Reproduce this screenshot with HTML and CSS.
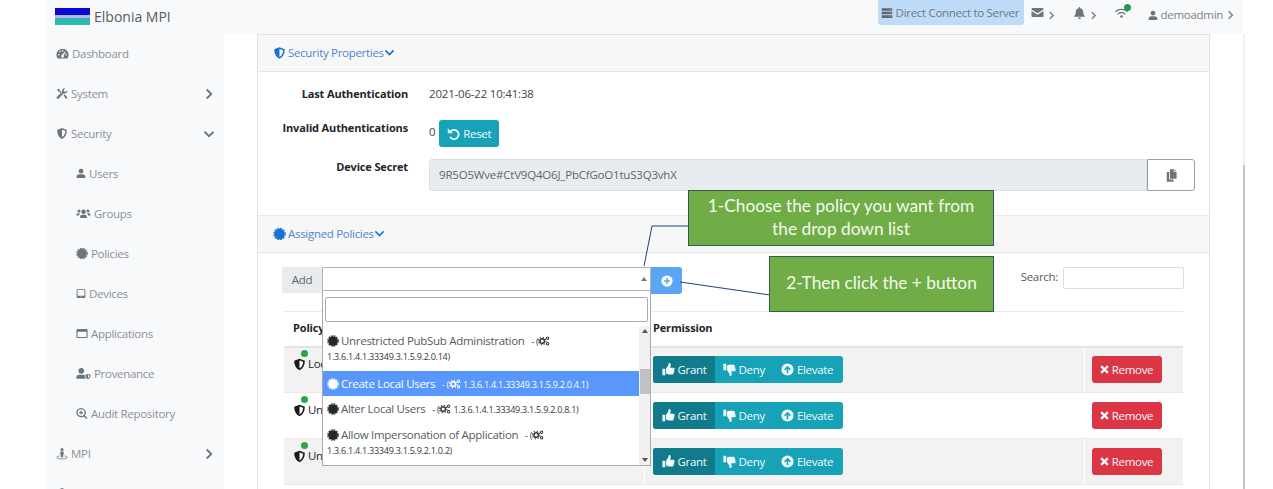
FILE: index.html
```html
<!DOCTYPE html>
<html lang="en">
<head>
    <meta charset="UTF-8">
    <title>Elbonia MPI</title>
    <link rel="stylesheet" href="styles.css">
</head>
<body>
    <svg class="icon-defs" width="0" height="0">
        <symbol id="i-gauge" viewBox="0 0 16 16"><path fill-rule="evenodd" d="M8 2A7.5 7.5 0 0 0 .5 9.5c0 1.5.5 3 1.3 4.2.2.2.4.3.7.3h11c.3 0 .5-.1.7-.3.8-1.200 1.300-2.700 1.300-4.200A7.500 7.500 0 0 0 8 2zM3.500 10.500a1 1 0 1 1 0-2 1 1 0 0 1 0 2zM5 6.500a1 1 0 1 1 0-2 1 1 0 0 1 0 2zM8 5.500a1 1 0 1 1 0-2 1 1 0 0 1 0 2zM12.500 10.500a1 1 0 1 1 0-2 1 1 0 0 1 0 2zM9.800 11a1.800 1.800 0 1 1-2.600-1.200L11 5.500l.8.5-2.400 4.500c.2.100.3.300.4.500z"/></symbol>
        <symbol id="i-tools" viewBox="0 0 16 16"><path d="M1.500 3 3 1.500l2 1.200.2 1.500 3 3-1.200 1.200-3-3-1.300-.2zM11.500 1a3.500 3.500 0 0 0-3.300 4.600L1.200 12.500a1.600 1.600 0 0 0 2.300 2.300l6.900-7A3.500 3.500 0 0 0 14.800 3.500L12.700 5.600l-2-.4-.4-2L12.400 1.100A3.500 3.500 0 0 0 11.500 1zM10 10l1-1 3.800 3.800a1.500 1.500 0 0 1-2 2z"/></symbol>
        <symbol id="i-shield" viewBox="0 0 16 16"><path d="M8 .8 14.500 3.300c0 5.500-2 9.700-6.500 11.900C3.500 13 1.500 8.800 1.500 3.300z"/><path fill="#fff" d="M8 3v9.800c2.900-1.700 4.300-4.600 4.500-8.200z"/></symbol>
        <symbol id="i-user" viewBox="0 0 16 16"><circle cx="8" cy="4.200" r="3.700"/><path d="M1 15v-2c0-2.300 1.700-4 4-4h6c2.300 0 4 1.700 4 4v2z"/></symbol>
        <symbol id="i-users" viewBox="0 0 20 16"><circle cx="10" cy="5.500" r="3"/><circle cx="4" cy="4.500" r="2"/><circle cx="16" cy="4.500" r="2"/><path d="M5.500 14v-1.500c0-2 1.300-3 3-3h3c1.700 0 3 1 3 3V14zM.5 10.500c0-2 1-3 2.500-3h2c.300 0 .6.100.8.300C4.500 8.500 4 9.500 3.800 10.500zM19.500 10.500c0-2-1-3-2.500-3h-2c-.3 0-.6.100-.8.300 1.300.7 1.800 1.700 2 2.700z"/></symbol>
        <symbol id="i-cert" viewBox="0 0 16 16"><circle cx="8" cy="8" r="6.500"/><circle cx="8" cy="8" r="7" fill="none" stroke="currentColor" stroke-width="1.400" stroke-dasharray="2.400 1.265"/></symbol>
        <symbol id="i-tablet" viewBox="0 0 16 16"><path fill-rule="evenodd" d="M2.500 1h11A1.500 1.500 0 0 1 15 2.500v11a1.500 1.500 0 0 1-1.500 1.500h-11A1.500 1.500 0 0 1 1 13.500v-11A1.500 1.500 0 0 1 2.500 1zM2.500 2.500V11.500h11V2.500zM8 12.300a.8.8 0 1 0 0 1.600.8.800 0 0 0 0-1.600z"/></symbol>
        <symbol id="i-window" viewBox="0 0 16 16"><path fill-rule="evenodd" d="M2 2h12a1.500 1.500 0 0 1 1.500 1.500v9A1.500 1.500 0 0 1 14 14H2a1.500 1.500 0 0 1-1.500-1.500v-9A1.500 1.500 0 0 1 2 2zM2 5.500v7h12v-7z"/></symbol>
        <symbol id="i-user-shield" viewBox="0 0 20 16"><circle cx="7" cy="4.500" r="3.700"/><path d="M.5 15v-2c0-2 1.500-3.500 3.500-3.500h6c.5 0 1 .1 1.400.3.100 2 .6 3.800 1.600 5.200z"/><path d="M16 8.500l3.500 1.200c0 2.800-1 4.800-3.500 6-2.500-1.200-3.500-3.200-3.500-6z"/><path fill="#f8f9fa" d="M16 10v4c1.200-.8 1.900-1.900 2-3.300z"/></symbol>
        <symbol id="i-search-plus" viewBox="0 0 16 16"><path fill-rule="evenodd" d="M6.800.5a6.300 6.300 0 0 1 5 10.100l3.500 3.500-1.300 1.300-3.500-3.500A6.300 6.300 0 1 1 6.800.5zm0 1.800a4.500 4.500 0 1 0 0 9 4.500 4.500 0 0 0 0-9z"/><path d="M6 4.200h1.600V6h1.800v1.500H7.600v1.800H6V7.500H4.200V6H6z"/></symbol>
        <symbol id="i-street" viewBox="0 0 16 16"><circle cx="8" cy="2.500" r="2"/><path d="M6 5.200h4l.5 4.300H9.500V13h-3V9.500h-1z"/><path fill="none" stroke="currentColor" stroke-width="1" d="M5 11.200C2.500 11.700 1 12.500 1 13.300c0 1 3 1.900 7 1.900s7-.9 7-1.900c0-.8-1.500-1.600-4-2.100"/></symbol>
        <symbol id="i-right" viewBox="0 0 10 16"><path fill="none" stroke="currentColor" stroke-width="2.400" d="M2 2l6 6-6 6"/></symbol>
        <symbol id="i-down" viewBox="0 0 16 10"><path fill="none" stroke="currentColor" stroke-width="2.400" d="M2 2l6 6 6-6"/></symbol>
        <symbol id="i-server" viewBox="0 0 16 16"><path fill-rule="evenodd" d="M1 1.500h14v3.500H1zM1 6.200h14v3.500H1zM1 11h14v3.500H1zM11.500 2.700v1h1v-1zM11.500 7.500v1h1v-1zM11.500 12.300v1h1v-1z"/></symbol>
        <symbol id="i-mail" viewBox="0 0 16 12"><path d="M1.500 0h13A1.500 1.500 0 0 1 16 1.500v.5L8 7 0 2v-.5A1.500 1.500 0 0 1 1.500 0zM0 4l8 5 8-5v6.500a1.500 1.500 0 0 1-1.500 1.500h-13A1.500 1.500 0 0 1 0 10.500z"/></symbol>
        <symbol id="i-bell" viewBox="0 0 14 16"><path d="M7 0a1 1 0 0 1 1 1v.8c2.400.4 4 2.400 4 4.700 0 3.600 1.200 4.700 2 5.500v1H0v-1c.8-.8 2-1.900 2-5.500 0-2.300 1.600-4.300 4-4.700V1a1 1 0 0 1 1-1zM5 14h4a2 2 0 0 1-4 0z"/></symbol>
        <symbol id="i-wifi" viewBox="0 0 18 13"><path fill="none" stroke="currentColor" stroke-width="1.700" d="M1 4.800C5.500.8 12.500.8 17 4.800M4 8c3-2.500 7-2.500 10 0"/><circle cx="9" cy="11" r="1.700"/></symbol>
        <symbol id="i-copy" viewBox="0 0 14 16"><path d="M5 0h5v3.500h3.500V12H5zM11 0l2.500 2.500H11zM1 3.500h3V13h5.500v3H1z"/></symbol>
        <symbol id="i-undo" viewBox="0 0 16 16"><path d="M1 1.500l1.800 1.800 1 1A6.800 6.800 0 1 1 3 13l1.400-1.500A4.700 4.700 0 1 0 5.300 5.800l1.800 1.800H1z"/></symbol>
        <symbol id="i-plus-circle" viewBox="0 0 16 16"><path fill-rule="evenodd" d="M8 .5a7.500 7.500 0 1 1 0 15 7.500 7.500 0 0 1 0-15zM7 4v3H4v2h3v3h2V9h3V7H9V4z"/></symbol>
        <symbol id="i-up-circle" viewBox="0 0 16 16"><path fill-rule="evenodd" d="M8 .5a7.500 7.500 0 1 1 0 15 7.500 7.500 0 0 1 0-15zM8 3.500L3.800 7.800l1.300 1.300L7 7.200V12.500h2V7.200l1.900 1.900 1.300-1.300z"/></symbol>
        <symbol id="i-thumb-up" viewBox="0 0 16 16"><path d="M.5 7H4v8H.5zM5 7l2.500-3.500c.5-.8.500-1.500.5-2.500 0-.5.500-1 1-.9 1.500.2 2 1.500 1.700 3L10 5.800h4a1.500 1.500 0 0 1 1 2.700c.5.600.400 1.500-.2 2 .3.700.1 1.500-.6 1.900.2.900-.3 1.600-1.200 1.600H8c-1 0-2-.5-3-1z"/></symbol>
        <symbol id="i-thumb-down" viewBox="0 0 16 16"><path d="M.5 9H4V1H.5zM5 9l2.500 3.500c.5.800.500 1.500.5 2.500 0 .5.500 1 1 .9 1.500-.2 2-1.500 1.700-3L10 10.200h4a1.500 1.500 0 0 0 1-2.700c.5-.6.400-1.500-.2-2 .3-.7.1-1.500-.6-1.900.2-.9-.3-1.600-1.200-1.600H8c-1 0-2 .5-3 1z"/></symbol>
        <symbol id="i-times" viewBox="0 0 12 12"><path fill="none" stroke="currentColor" stroke-width="3" d="M1.500 1.500l9 9M10.500 1.500l-9 9"/></symbol>
        <symbol id="i-cogs" viewBox="0 0 20 16"><circle cx="7" cy="8" r="3.800" fill="none" stroke="currentColor" stroke-width="2.600"/><circle cx="7" cy="8" r="6.300" fill="none" stroke="currentColor" stroke-width="1.800" stroke-dasharray="2.200 2.750"/><circle cx="16" cy="3.500" r="2" fill="none" stroke="currentColor" stroke-width="1.700"/><circle cx="16" cy="12.500" r="2" fill="none" stroke="currentColor" stroke-width="1.700"/></symbol>
    </svg>

    <div class="app">
        <header class="topbar">
            <a class="brand">
                <span class="brand-logo"></span>
                <span>Elbonia MPI</span>
            </a>
            <div class="topbar-right">
                <a class="direct-btn"><svg class="ico"><use href="#i-server"/></svg> Direct Connect to Server</a>
                <a class="top-item mail"><svg class="ico-mail"><use href="#i-mail"/></svg><svg class="top-chev"><use href="#i-right"/></svg></a>
                <a class="top-item bell"><svg class="ico-bell"><use href="#i-bell"/></svg><svg class="top-chev"><use href="#i-right"/></svg></a>
                <a class="top-item wifi"><svg class="ico-wifi"><use href="#i-wifi"/></svg><span class="wifi-dot"></span></a>
                <a class="top-item account"><svg class="ico-acct"><use href="#i-user"/></svg><span>demoadmin</span><svg class="acct-chev"><use href="#i-right"/></svg></a>
            </div>
        </header>

        <div class="layout">
            <nav class="sidebar">
                <a class="nav-item"><svg class="nav-ico gauge"><use href="#i-gauge"/></svg>Dashboard</a>
                <a class="nav-item"><svg class="nav-ico"><use href="#i-tools"/></svg>System<svg class="nav-chev"><use href="#i-right"/></svg></a>
                <a class="nav-item"><svg class="nav-ico"><use href="#i-shield"/></svg>Security<svg class="nav-chev-down"><use href="#i-down"/></svg></a>
                <a class="nav-item sub"><svg class="nav-ico narrow"><use href="#i-user"/></svg>Users</a>
                <a class="nav-item sub"><svg class="nav-ico wide"><use href="#i-users"/></svg>Groups</a>
                <a class="nav-item sub"><svg class="nav-ico"><use href="#i-cert"/></svg>Policies</a>
                <a class="nav-item sub"><svg class="nav-ico narrow"><use href="#i-tablet"/></svg>Devices</a>
                <a class="nav-item sub"><svg class="nav-ico"><use href="#i-window"/></svg>Applications</a>
                <a class="nav-item sub"><svg class="nav-ico wide"><use href="#i-user-shield"/></svg>Provenance</a>
                <a class="nav-item sub"><svg class="nav-ico"><use href="#i-search-plus"/></svg>Audit Repository</a>
                <a class="nav-item"><svg class="nav-ico"><use href="#i-street"/></svg>MPI<svg class="nav-chev"><use href="#i-right"/></svg></a>
                <a class="nav-item"><svg class="nav-ico"><use href="#i-shield"/></svg>Administration<svg class="nav-chev"><use href="#i-right"/></svg></a>
            </nav>

            <main class="main">
                <section class="card">
                    <div class="card-head">
                        <svg class="head-ico"><use href="#i-shield"/></svg>
                        <span>Security Properties</span>
                        <svg class="head-chev"><use href="#i-down"/></svg>
                    </div>
                    <div class="props">
                        <div class="prop-label first">Last Authentication</div>
                        <div class="prop-value first">2021-06-22 10:41:38</div>
                        <div class="prop-label second">Invalid Authentications</div>
                        <div class="prop-value second">
                            <span>0</span>
                            <a class="btn btn-info reset"><svg class="btn-ico"><use href="#i-undo"/></svg>Reset</a>
                        </div>
                        <div class="prop-label third">Device Secret</div>
                        <div class="secret">
                            <div class="secret-input">9R5O5Wve#CtV9Q4O6J_PbCfGoO1tuS3Q3vhX</div>
                            <a class="copy-btn"><svg class="copy-ico"><use href="#i-copy"/></svg></a>
                        </div>
                    </div>

                    <div class="card-head second-head">
                        <svg class="head-ico cert"><use href="#i-cert"/></svg>
                        <span>Assigned Policies</span>
                        <svg class="head-chev"><use href="#i-down"/></svg>
                    </div>
                    <div class="policies">
                        <div class="add-row">
                            <div class="add-group">
                                <span class="add-label">Add</span>
                                <div class="add-select"><span class="select-arrow"></span></div>
                                <a class="add-btn"><svg class="add-ico"><use href="#i-plus-circle"/></svg></a>
                            </div>
                            <label class="search">Search: <span class="search-input"></span></label>
                        </div>

                        <table class="policy-table">
                            <thead>
                                <tr>
                                    <th class="col-policy">Policy</th>
                                    <th class="col-perm">Permission</th>
                                    <th class="col-act"></th>
                                </tr>
                            </thead>
                            <tbody>
                                <tr class="striped first-row">
                                    <td class="policy-name"><span class="policy-shield"><svg class="shield-ico"><use href="#i-shield"/></svg><span class="green-dot"></span></span>Local Users</td>
                                    <td class="perm-cell"><div class="btn-group"><a class="seg active"><svg class="btn-ico"><use href="#i-thumb-up"/></svg>Grant</a><a class="seg"><svg class="btn-ico"><use href="#i-thumb-down"/></svg>Deny</a><a class="seg"><svg class="btn-ico"><use href="#i-up-circle"/></svg>Elevate</a></div></td>
                                    <td class="act-cell"><a class="btn btn-danger"><svg class="x-ico"><use href="#i-times"/></svg>Remove</a></td>
                                </tr>
                                <tr>
                                    <td class="policy-name"><span class="policy-shield"><svg class="shield-ico"><use href="#i-shield"/></svg><span class="green-dot"></span></span>Unrestricted Metadata</td>
                                    <td class="perm-cell"><div class="btn-group"><a class="seg active"><svg class="btn-ico"><use href="#i-thumb-up"/></svg>Grant</a><a class="seg"><svg class="btn-ico"><use href="#i-thumb-down"/></svg>Deny</a><a class="seg"><svg class="btn-ico"><use href="#i-up-circle"/></svg>Elevate</a></div></td>
                                    <td class="act-cell"><a class="btn btn-danger"><svg class="x-ico"><use href="#i-times"/></svg>Remove</a></td>
                                </tr>
                                <tr class="striped">
                                    <td class="policy-name"><span class="policy-shield"><svg class="shield-ico"><use href="#i-shield"/></svg><span class="green-dot"></span></span>Unrestricted Clinical Data</td>
                                    <td class="perm-cell"><div class="btn-group"><a class="seg active"><svg class="btn-ico"><use href="#i-thumb-up"/></svg>Grant</a><a class="seg"><svg class="btn-ico"><use href="#i-thumb-down"/></svg>Deny</a><a class="seg"><svg class="btn-ico"><use href="#i-up-circle"/></svg>Elevate</a></div></td>
                                    <td class="act-cell"><a class="btn btn-danger"><svg class="x-ico"><use href="#i-times"/></svg>Remove</a></td>
                                </tr>
                            </tbody>
                        </table>
                    </div>
                </section>
            </main>

            <div class="page-scroll"><div class="page-thumb"></div></div>
        </div>
    </div>

    <!-- select2 style dropdown, open over the table -->
    <div class="dropdown">
        <div class="dd-search"></div>
        <div class="dd-body">
            <ul class="dd-list">
                <li class="dd-opt tall"><svg class="opt-ico"><use href="#i-cert"/></svg>Unrestricted PubSub Administration <span class="oid">- (<svg class="cog-ico"><use href="#i-cogs"/></svg> 1.3.6.1.4.1.33349.3.1.5.9.2.0.14)</span></li>
                <li class="dd-opt selected"><svg class="opt-ico"><use href="#i-cert"/></svg>Create Local Users <span class="oid">- (<svg class="cog-ico"><use href="#i-cogs"/></svg> 1.3.6.1.4.1.33349.3.1.5.9.2.0.4.1)</span></li>
                <li class="dd-opt gap"><svg class="opt-ico"><use href="#i-cert"/></svg>Alter Local Users <span class="oid">- (<svg class="cog-ico"><use href="#i-cogs"/></svg> 1.3.6.1.4.1.33349.3.1.5.9.2.0.8.1)</span></li>
                <li class="dd-opt"><svg class="opt-ico"><use href="#i-cert"/></svg>Allow Impersonation of Application <span class="oid">- (<svg class="cog-ico"><use href="#i-cogs"/></svg> 1.3.6.1.4.1.33349.3.1.5.9.2.1.0.2)</span></li>
            </ul>
            <div class="dd-scroll">
                <span class="dd-up"></span>
                <span class="dd-thumb"></span>
                <span class="dd-down"></span>
            </div>
        </div>
    </div>

    <!-- annotation boxes added on top of the screenshot -->
    <svg class="callout-lines" width="1273" height="489">
        <path d="M644 266 652 226H689"/>
        <path d="M680 282 770 295"/>
    </svg>
    <div class="callout one">1-Choose the policy you want from the drop down list</div>
    <div class="callout two">2-Then click the + button</div>
</body>
</html>
```

FILE: styles.css
```css
html, body {
    margin: 0;
    height: 489px;
    overflow: hidden;
    background: #fff;
}
body {
    font-family: "Open Sans", "Noto Sans", sans-serif;
    font-size: 11.5px;
    letter-spacing: -0.3px;
    color: #212529;
    position: relative;
}
.icon-defs {
    position: absolute;
}
svg {
    fill: currentColor;
    flex: none;
}
.app {
    margin-left: 47px;
    width: 1198px;
    height: 489px;
    display: flex;
    flex-direction: column;
}

/* top bar */
.topbar {
    height: 34px;
    width: 1196px;
    background: #f8f9fa;
    display: flex;
    justify-content: space-between;
    flex: none;
}
.brand {
    display: flex;
    align-items: center;
    gap: 4px;
    margin-left: 8px;
    font-size: 14px;
    letter-spacing: 0;
    color: #555b61;
    height: 33px;
}
.brand-logo {
    width: 35px;
    height: 17px;
    background: linear-gradient(#0a0ad8 0 7px, #b6b6e2 7px 10px, #2fb8b2 10px);
}
.topbar-right {
    display: flex;
    align-items: flex-start;
    color: #7b8288;
    margin-right: 9px;
}
.direct-btn {
    display: flex;
    align-items: center;
    gap: 3px;
    height: 25px;
    width: 146px;
    padding-left: 3px;
    box-sizing: border-box;
    background: #bedbf7;
    border-radius: 0 0 3px 3px;
    color: #6d7a85;
    white-space: nowrap;
}
.ico {
    width: 12px;
    height: 12px;
    color: #5f666c;
}
.top-item {
    display: flex;
    align-items: center;
    height: 28px;
    color: #6c757d;
    position: relative;
}
.top-chev {
    width: 7px;
    height: 9px;
    margin-top: 2px;
}
.mail {
    margin-left: 7px;
    width: 43px;
}
.ico-mail {
    width: 13px;
    height: 9px;
    margin-right: 4px;
    margin-top: -3px;
}
.bell {
    width: 40px;
}
.ico-bell {
    width: 11px;
    height: 12px;
    margin-right: 5px;
    margin-top: -3px;
}
.wifi {
    width: 34px;
}
.ico-wifi {
    width: 15px;
    height: 10px;
    margin-top: -3px;
}
.wifi-dot {
    position: absolute;
    left: 10px;
    top: 4px;
    width: 7px;
    height: 7px;
    border-radius: 50%;
    background: #1e9e4a;
}
.account {
    color: #7b8288;
    gap: 3px;
}
.ico-acct {
    width: 10px;
    height: 11px;
    color: #6c757d;
    margin-top: 2px;
}
.account span {
    margin-top: 1px;
}
.acct-chev {
    width: 7px;
    height: 10px;
    margin-top: 2px;
    margin-left: 1px;
}

/* sidebar */
.layout {
    display: flex;
    flex: 1;
    min-height: 0;
}
.sidebar {
    width: 177px;
    background: #f8f9fa;
    flex: none;
    overflow: hidden;
}
.nav-item {
    display: flex;
    align-items: center;
    height: 40px;
    padding-left: 9px;
    padding-bottom: 1px;
    gap: 3px;
    color: #8b9096;
    position: relative;
    box-sizing: border-box;
}
.nav-item.sub {
    padding-left: 29px;
}
.nav-ico {
    width: 12px;
    height: 13px;
    color: #6c757d;
}
.nav-ico.narrow {
    width: 10px;
}
.nav-ico.wide {
    width: 15px;
}
.nav-ico.gauge {
    width: 13px;
}
.nav-chev {
    position: absolute;
    right: 11px;
    width: 8px;
    height: 12px;
    margin-top: 1px;
    color: #6c757d;
}
.nav-chev-down {
    position: absolute;
    right: 9px;
    width: 12px;
    height: 8px;
    margin-top: 1px;
    color: #6c757d;
}

/* main */
.main {
    width: 1019px;
    padding-left: 33px;
    box-sizing: border-box;
    flex: none;
}
.page-scroll {
    width: 2px;
    background: #f2f2f2;
    flex: none;
}
.page-thumb {
    margin-top: 131px;
    height: 324px;
    background: #c6c6c6;
}
.card {
    width: 953px;
    height: 455px;
    border: 1px solid #e3e3e3;
    border-bottom: 0;
    box-sizing: border-box;
}
.card-head {
    height: 35px;
    padding-bottom: 1px;
    background: #f7f7f7;
    border-bottom: 1px solid #e5e5e5;
    display: flex;
    align-items: center;
    padding-left: 15px;
    color: #4d86cf;
}
.second-head {
    border-top: 1px solid #e9e9e9;
}
.head-ico {
    width: 13px;
    height: 14px;
    color: #1b72d6;
    margin-right: 2px;
}
.head-chev {
    width: 11px;
    height: 7px;
    color: #1b72d6;
}

/* properties */
.props {
    height: 143px;
    display: grid;
    grid-template-columns: 150px auto;
    grid-template-rows: 48px 39px 32px;
    column-gap: 21px;
    box-sizing: border-box;
}
.prop-label {
    font-size: 11px;
    letter-spacing: -0.15px;
    font-weight: 700;
    text-align: right;
    color: #212529;
    white-space: nowrap;
}
.prop-label.first {
    padding-top: 14px;
}
.prop-value.first {
    padding-top: 14px;
    letter-spacing: -0.2px;
}
.prop-value {
    color: #3f4449;
}
.prop-value.second {
    display: flex;
    align-items: flex-start;
    gap: 4px;
}
.prop-value.second span {
    margin-top: 4px;
}
.secret {
    display: flex;
    margin-right: 14px;
}
.secret-input {
    flex: 1;
    background: #e9ecef;
    border: 1px solid #dadfe3;
    border-radius: 3px 0 0 3px;
    padding-left: 9px;
    line-height: 30px;
    letter-spacing: -0.2px;
    color: #5f666c;
}
.copy-btn {
    width: 48px;
    height: 32px;
    box-sizing: border-box;
    border: 1px solid #9aa0a6;
    border-radius: 0 3px 3px 0;
    display: flex;
    align-items: center;
    justify-content: center;
}
.copy-ico {
    width: 11px;
    height: 13px;
    color: #6c757d;
}
.btn {
    display: inline-flex;
    align-items: center;
    justify-content: center;
    color: #f2fbfc;
    border-radius: 3px;
    height: 27px;
    gap: 3px;
    box-sizing: border-box;
}
.btn-info {
    background: #17a2b8;
}
.reset {
    width: 60px;
}
.btn-ico {
    width: 13px;
    height: 13px;
}
.btn-danger {
    background: #dc3545;
    width: 70px;
}
.x-ico {
    width: 9px;
    height: 9px;
}

/* policies */
.policies {
    padding: 0 25px 0 26px;
}
.add-row {
    display: flex;
    justify-content: space-between;
    padding-top: 14px;
    height: 44px;
}
.add-group {
    display: flex;
    align-items: flex-start;
    margin-left: -2px;
}
.add-label {
    width: 40px;
    height: 26px;
    background: #e9ecef;
    line-height: 26px;
    text-align: center;
    color: #5f666c;
    box-sizing: border-box;
}
.add-select {
    width: 329px;
    height: 24px;
    box-sizing: border-box;
    border: 1px solid #b4b4b4;
    background: #fff;
    position: relative;
}
.select-arrow {
    position: absolute;
    right: 3px;
    top: 9px;
    border: 3px solid transparent;
    border-top: 0;
    border-bottom: 4px solid #777;
}
.add-btn {
    width: 31px;
    height: 27px;
    background: #5aa5f5;
    border-radius: 0 3px 3px 0;
    display: flex;
    align-items: center;
    justify-content: center;
    color: #fff;
}
.add-ico {
    width: 12px;
    height: 12px;
}
.search {
    display: flex;
    align-items: flex-start;
    gap: 5px;
    color: #555b61;
    line-height: 20px;
}
.search-input {
    width: 121px;
    height: 22px;
    box-sizing: border-box;
    border: 1px solid #dcdfe2;
    border-radius: 2px;
}
.policy-table {
    width: 899px;
    border-collapse: collapse;
    table-layout: fixed;
}
.policy-table th {
    height: 35px;
    box-sizing: border-box;
    text-align: left;
    padding: 0 9px 2px;
    border-top: 1px solid #e9e9e9;
    border-bottom: 2px solid #e3e3e3;
    font-weight: 700;
    font-size: 11px;
    letter-spacing: -0.15px;
}
.col-policy {
    width: 360px;
}
.col-perm {
    width: 440px;
}
.col-act {
    width: 99px;
}
.policy-table td {
    height: 46px;
    padding: 9px 0 0 9px;
    box-sizing: border-box;
    vertical-align: top;
    border-bottom: 1px solid #e9e9e9;
}
.policy-table td + td {
    border-left: 1px solid #fff;
}
.policy-table .first-row td {
    padding-top: 8px;
}
.policy-table td.perm-cell {
    padding-left: 8px;
}
.policy-table td.act-cell {
    padding-left: 7px;
}
.striped td {
    background: #f2f2f2;
}
.policy-name {
    white-space: nowrap;
    overflow: hidden;
}
.policy-shield {
    display: inline-block;
    position: relative;
    margin-right: 2px;
}
.shield-ico {
    width: 13px;
    height: 15px;
    color: #17191b;
    vertical-align: middle;
}
.green-dot {
    position: absolute;
    left: 8px;
    top: -6px;
    width: 7px;
    height: 7px;
    border-radius: 50%;
    background: #28a745;
}
.btn-group {
    display: inline-flex;
    height: 27px;
    border-radius: 3px;
    overflow: hidden;
    background: #17a2b8;
    color: #f2fbfc;
}
.seg {
    display: flex;
    align-items: center;
    gap: 3px;
    padding: 0 8px;
}
.seg:last-child {
    padding-right: 10px;
}
.seg.active {
    background: #117a8b;
    width: 62px;
    padding-left: 9px;
    box-sizing: border-box;
}

/* dropdown */
.dropdown {
    position: absolute;
    left: 322px;
    top: 291px;
    width: 329px;
    height: 175px;
    box-sizing: border-box;
    border: 1px solid #aaa;
    border-top: 0;
    background: #fff;
    display: flex;
    flex-direction: column;
}
.dd-search {
    margin: 6px 2px 4px;
    height: 23px;
    flex: none;
    border: 1px solid #aaa;
    border-radius: 2px;
}
.dd-body {
    display: flex;
    flex: 1;
    min-height: 0;
}
.dd-list {
    list-style: none;
    margin: 0;
    padding: 2px 0 0;
    flex: 1;
    overflow: hidden;
}
.dd-opt {
    padding: 5px 0 5px 4px;
    line-height: 15px;
    color: #555b61;
}
.dd-opt.tall {
    padding-bottom: 8px;
}
.dd-opt.gap {
    padding-bottom: 6px;
}
.dd-opt .oid {
    font-size: 9px;
    line-height: 12px;
    letter-spacing: -0.25px;
    margin-left: 4px;
    color: #33383d;
}
.dd-opt.selected {
    background: #5897fb;
    color: #fff;
}
.dd-opt.selected .oid {
    color: #fff;
}
.opt-ico {
    width: 12px;
    height: 12px;
    color: #24282c;
    margin-right: 2px;
    vertical-align: -2px;
}
.selected .opt-ico {
    color: #fff;
}
.cog-ico {
    width: 12px;
    height: 10px;
    vertical-align: -1px;
}
.dd-scroll {
    width: 11px;
    flex: none;
    background: #f1f1f1;
    position: relative;
}
.dd-thumb {
    position: absolute;
    left: 1px;
    right: 0;
    top: 43px;
    height: 25px;
    background: #c1c1c1;
}
.dd-up, .dd-down {
    position: absolute;
    left: 3px;
    border: 3px solid transparent;
}
.dd-up {
    top: 3px;
    border-top: 0;
    border-bottom: 4px solid #555;
}
.dd-down {
    bottom: 3px;
    border-bottom: 0;
    border-top: 4px solid #555;
}

/* callouts */
.callout-lines {
    position: absolute;
    left: 0;
    top: 0;
    fill: none;
    stroke: #24406e;
    stroke-width: 1;
}
.callout {
    position: absolute;
    box-sizing: border-box;
    background: #70ad47;
    border: 1px solid #2f5d50;
    color: #f4faef;
    font-family: Lato, "Open Sans", sans-serif;
    font-size: 17.3px;
    letter-spacing: 0;
    line-height: 23px;
    text-align: center;
    display: flex;
    align-items: center;
    justify-content: center;
    padding-bottom: 2px;
}
.callout.one {
    left: 688px;
    top: 190px;
    width: 306px;
    height: 56px;
    padding-left: 18px;
    padding-right: 18px;
}
.callout.two {
    left: 769px;
    top: 256px;
    width: 225px;
    height: 56px;
    padding-bottom: 4px;
}
```
